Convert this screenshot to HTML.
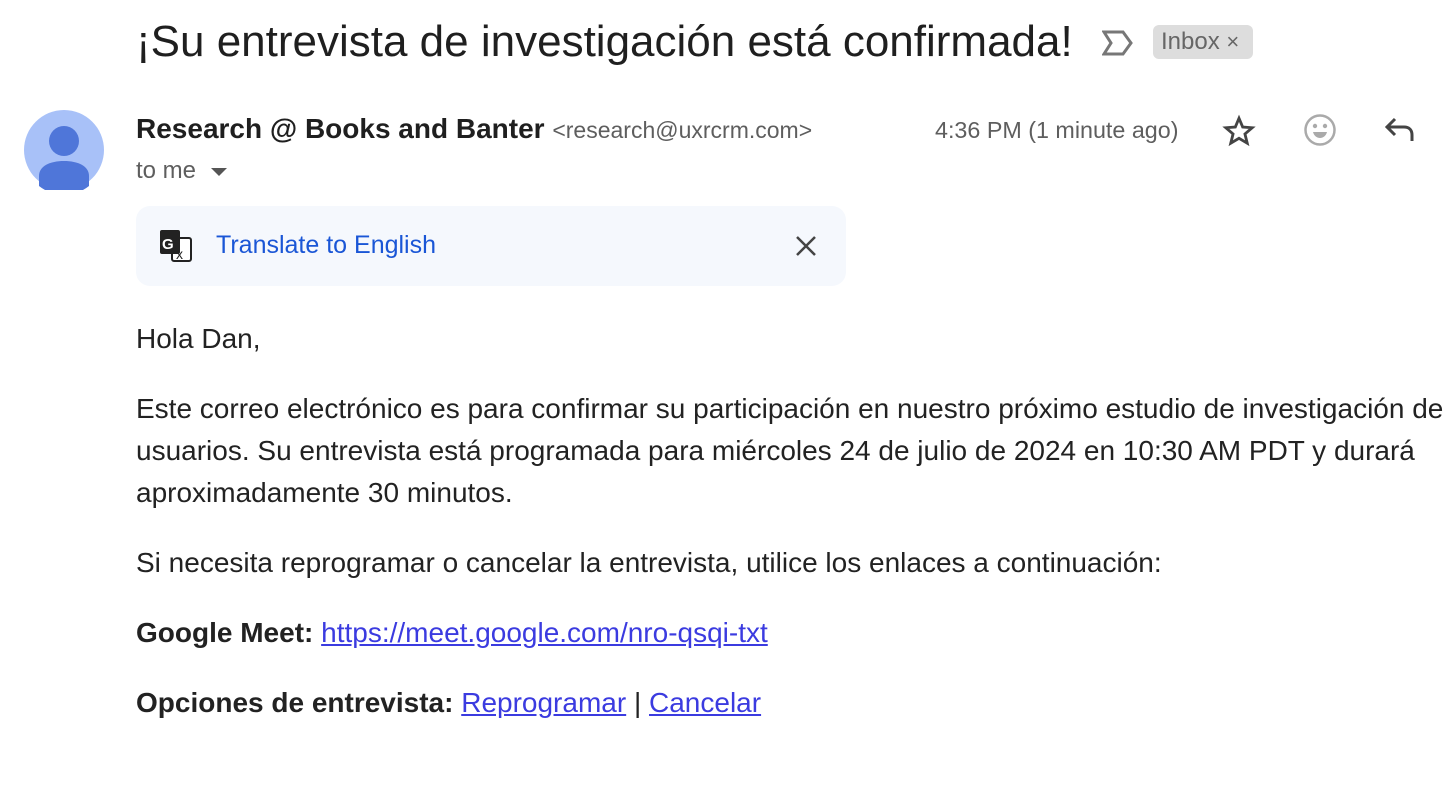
<!DOCTYPE html>
<html><head><meta charset="utf-8"><style>
body{margin:0;width:1456px;height:812px;background:#fff;font-family:"Liberation Sans",Arial,sans-serif;position:relative;overflow:hidden;color:#222}
.a{position:absolute;white-space:nowrap}
.t{left:136px;top:17px;font-size:44px;color:#1f1f1f}
.lab{left:1153px;top:25px;height:34px;width:100px;background:#dddddd;border-radius:6px;font-size:24px;color:#666;line-height:34px;text-indent:8px}
.p{font-size:28px;color:#222;left:136px}
a{color:#3b3be0;text-decoration:underline}
</style></head><body>
<div class="a t">¡Su entrevista de investigación está confirmada!</div>
<svg class="a" style="left:1102px;top:30px" width="32" height="26" viewBox="0 0 32 26"><path d="M2 2H21L29 13L21 24H2L9 13Z" fill="none" stroke="#777" stroke-width="3" stroke-linejoin="miter"/></svg>
<div class="a lab">Inbox <span style="font-size:22px">×</span></div>
<svg class="a" style="left:24px;top:110px" width="80" height="80" viewBox="0 0 80 80"><circle cx="40" cy="40" r="40" fill="#a8c1f8"/><circle cx="40" cy="31" r="15" fill="#4f76d9"/><path d="M15 76V66C15 56 26 51 40 51S65 56 65 66V76A40 40 0 0 1 15 76Z" fill="#4f76d9"/></svg>
<div class="a" style="left:136px;top:113px;font-size:28px;font-weight:bold;color:#1f1f1f">Research @ Books and Banter <span style="font-weight:normal;font-size:23px;color:#5e5e5e">&lt;research@uxrcrm.com&gt;</span></div>
<div class="a" style="left:136px;top:157px;font-size:24px;color:#5e5e5e">to me <span style="display:inline-block;width:0;height:0;border-left:8px solid transparent;border-right:8px solid transparent;border-top:8px solid #555;vertical-align:middle;margin-left:8px"></span></div>
<div class="a" style="left:935px;top:117px;font-size:23.3px;color:#5e5e5e">4:36 PM (1 minute ago)</div>
<svg class="a" style="left:1222px;top:114px" width="34" height="34" viewBox="0 0 24 24"><path d="M12 3l2.6 6.2 6.7.5-5.1 4.4 1.6 6.5L12 17.1 6.2 20.6l1.6-6.5L2.7 9.7l6.7-.5z" fill="none" stroke="#444" stroke-width="2" stroke-linejoin="miter"/></svg>
<svg class="a" style="left:1303px;top:113px" width="34" height="34" viewBox="0 0 34 34"><circle cx="17" cy="17" r="14.5" fill="none" stroke="#aaa" stroke-width="2.5"/><circle cx="12" cy="13" r="2.2" fill="#aaa"/><circle cx="22" cy="13" r="2.2" fill="#aaa"/><path d="M10 19H24C23 23 20 25 17 25S11 23 10 19Z" fill="#aaa"/></svg>
<svg class="a" style="left:1384px;top:116px" width="32" height="28" viewBox="0 0 32 28"><path d="M11 3L3 11L11 19M3 11H20C26 11 28 15 28 19V25" fill="none" stroke="#444" stroke-width="3"/></svg>
<div class="a" style="left:136px;top:206px;width:710px;height:80px;background:#f5f8fd;border-radius:14px"></div>
<svg class="a" style="left:159px;top:229px" width="34" height="34" viewBox="0 0 34 34"><rect x="13" y="9" width="19" height="23" rx="2" fill="#fff" stroke="#222" stroke-width="2"/><rect x="1" y="1" width="20" height="24" rx="2" fill="#222"/><text x="3" y="20" font-family="Liberation Sans" font-weight="bold" font-size="15" fill="#fff">G</text><text x="17" y="30" font-family="Liberation Sans" font-size="14" fill="#222">x</text></svg>
<div class="a" style="left:216px;top:231px;font-size:25px;color:#1a56d6">Translate to English</div>
<svg class="a" style="left:794px;top:234px" width="24" height="24" viewBox="0 0 24 24"><path d="M3 3L21 21M21 3L3 21" stroke="#444" stroke-width="2.5"/></svg>
<div class="a p" style="top:323px">Hola Dan,</div>
<div class="a p" style="line-height:42px;top:388px">Este correo electrónico es para confirmar su participación en nuestro próximo estudio de investigación de<br>usuarios. Su entrevista está programada para miércoles 24 de julio de 2024 en 10:30 AM PDT y durará<br>aproximadamente 30 minutos.</div>
<div class="a p" style="top:547px">Si necesita reprogramar o cancelar la entrevista, utilice los enlaces a continuación:</div>
<div class="a p" style="top:617px"><b>Google Meet:</b> <a>https://meet.google.com/nro-qsqi-txt</a></div>
<div class="a p" style="top:687px"><b>Opciones de entrevista:</b> <a>Reprogramar</a> | <a>Cancelar</a></div>
</body></html>
